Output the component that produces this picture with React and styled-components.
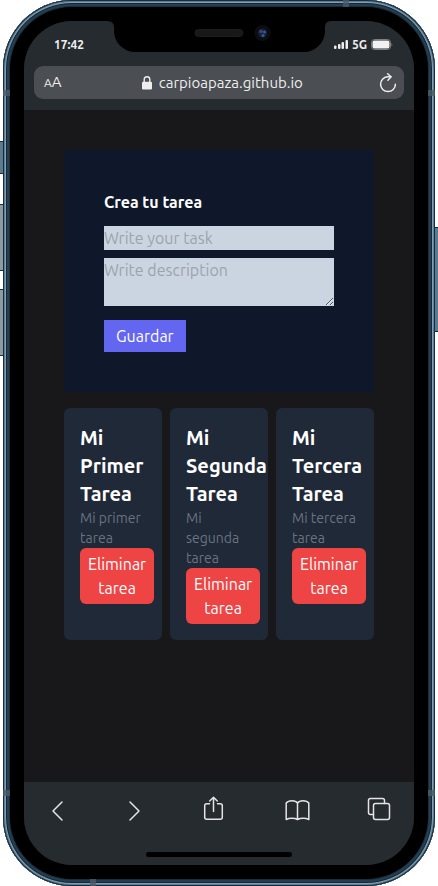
import React, { useState } from "react";
import styled, { createGlobalStyle } from "styled-components";

const GlobalStyle = createGlobalStyle`
  *, *::before, *::after { box-sizing: border-box; }
  body {
    margin: 0;
    background: #ffffff;
    font-family: Ubuntu, "Noto Sans", "Open Sans", sans-serif;
    font-size: 16px;
    line-height: 24px;
  }
  h1, h2, p { margin: 0; }
  button, input, textarea { font: inherit; color: inherit; border: 0; padding: 0; margin: 0; }
  button { background: none; cursor: pointer; }
`;

const Stage = styled.div`
  display: flex;
  min-height: 100vh;
  padding: 0 3px;
`;

const Phone = styled.div`
  position: relative;
  display: flex;
  flex: 1;
  min-width: 0;
  padding: 21px;
  border-radius: 69px;
  background: #000000;
  box-shadow:
    inset 0 0 0 1px #1b2b37,
    inset 0 0 0 2px #5b7d95,
    inset 0 0 0 3px #7d9fb8,
    inset 0 0 0 4px #182833,
    inset 0 0 0 6px #243f50,
    inset 0 0 0 7px #1c2d39;
`;

const SideKey = styled.span`
  position: absolute;
  top: ${(p) => p.$top}px;
  ${(p) => p.$side}: -3px;
  width: 3px;
  height: ${(p) => p.$length}px;
  border-top: 1px solid #1b2b37;
  border-bottom: 1px solid #1b2b37;
  background: ${(p) => p.$color};
`;

const Antenna = styled.span`
  position: absolute;
  width: ${(p) => (p.$flat ? 6 : 7)}px;
  height: ${(p) => (p.$flat ? 7 : 6)}px;
  background: #4b5c66;
  opacity: 0.8;
  ${(p) => p.$edge}: 0;
  ${(p) => p.$from}: ${(p) => p.$offset}px;
`;

const Notch = styled.svg`
  position: absolute;
  top: 20px;
  left: 50%;
  width: 224px;
  height: 32px;
  transform: translateX(-50%);
`;

const Screen = styled.div`
  display: flex;
  flex-direction: column;
  flex: 1;
  min-width: 0;
  overflow: hidden;
  border-radius: 48px;
  background: #18181a;
`;

const BrowserHeader = styled.header`
  padding: 0 10px 11px;
  background: #262b2f;
  color: #eeeeee;
`;

const StatusBar = styled.div`
  display: flex;
  align-items: center;
  justify-content: space-between;
  height: 45px;
  padding: 2px 11px 0 20px;
  font-size: 12px;
  font-weight: 700;
`;

const StatusGroup = styled.div`
  display: flex;
  align-items: center;
  gap: 4px;
`;

const AddressBar = styled.div`
  display: flex;
  align-items: center;
  height: 33px;
  padding: 0 7px 0 10px;
  border-radius: 9px;
  background: #4b4e52;
`;

const TextSizeButton = styled.button`
  display: flex;
  align-items: baseline;
  font-size: 15px;
  line-height: 24px;
`;

const SmallLetter = styled.span`
  font-size: 12px;
`;

const Address = styled.a`
  display: flex;
  flex: 1;
  align-items: center;
  justify-content: center;
  gap: 7px;
  padding-left: 4px;
  color: inherit;
  font-size: 15px;
  line-height: 20px;
  text-decoration: none;
`;

const IconButton = styled.button`
  display: flex;
  align-items: center;
  justify-content: center;
`;

const Icon = styled.svg`
  display: block;
  flex: none;
`;

const Page = styled.main`
  flex: 1;
  padding: 40px;
`;

const TaskForm = styled.form`
  padding: 40px;
  margin-bottom: 16px;
  background: #0f172a;
`;

const FormTitle = styled.h1`
  margin-bottom: 12px;
  color: #ffffff;
  font-size: 16px;
  font-weight: 700;
  line-height: 24px;
`;

const TextField = styled.input`
  display: block;
  width: 100%;
  height: 24px;
  margin-bottom: 8px;
  border-radius: 0;
  background: #cbd5e1;
  color: #111827;
  outline: none;
  &::placeholder { color: #9ca3af; opacity: 1; }
`;

const DescriptionField = styled.textarea`
  display: block;
  width: 100%;
  height: 48px;
  margin-bottom: 14px;
  border-radius: 0;
  background: #cbd5e1;
  color: #111827;
  outline: none;
  resize: both;
  &::placeholder { color: #9ca3af; opacity: 1; }
`;

const SaveButton = styled.button`
  padding: 4px 12px;
  background: #6366f1;
  color: #ffffff;
`;

const TaskGrid = styled.section`
  display: grid;
  grid-template-columns: repeat(3, minmax(0, 1fr));
  gap: 8px;
`;

const TaskCard = styled.article`
  padding: 16px;
  border-radius: 6px;
  background: #1f2937;
`;

const TaskTitle = styled.h2`
  color: #ffffff;
  font-size: 20px;
  font-weight: 700;
  line-height: 28px;
`;

const TaskText = styled.p`
  color: #6b7280;
  font-size: 14px;
  line-height: 20px;
`;

const DeleteButton = styled.button`
  padding: 4px 8px;
  border-radius: 6px;
  background: #ef4444;
  color: #ffffff;
`;

const BrowserFooter = styled.footer`
  padding: 10px 0 8px;
  background: #262b2f;
  color: #e4e4e6;
`;

const Toolbar = styled.nav`
  display: grid;
  grid-template-columns: 66fr 88fr 70fr 98fr 66fr;
  padding-right: 2px;
  margin-bottom: 24px;
`;

const HomeIndicator = styled.div`
  width: 146px;
  height: 5px;
  margin: 0 auto;
  border-radius: 3px;
  background: #000000;
`;

const toolbarIcons = [
  { label: "Atrás", shape: <path d="M19 10 10 19l9 9" /> },
  { label: "Adelante", shape: <path d="m10 10 9 9-9 9" /> },
  {
    label: "Compartir",
    shape: (
      <>
        <path d="M10.5 11.8H7.7Q5.7 11.8 5.7 13.8v11.4q0 2 2 2h13.6q2 0 2-2V13.8q0-2-2-2h-2.8" />
        <path d="M14.5 19.5V5.2M10.7 9l3.8-3.8L18.3 9" />
      </>
    ),
  },
  {
    label: "Marcadores",
    shape: (
      <path d="M14.5 11v16.5M14.5 11C12.5 8 5.5 8 3.2 11v16.5c3-1.8 8.3-1.8 11.3 0 3-1.8 8.3-1.8 11.3 0V11C23.5 8 16.5 8 14.5 11" />
    ),
  },
  {
    label: "Pestañas",
    shape: (
      <>
        <rect x="8.5" y="11.5" width="16" height="16" rx="2" />
        <path d="M8.5 22.5h-3q-2 0-2-2v-12q0-2 2-2h12q2 0 2 2v3" />
      </>
    ),
  },
];

const initialTasks = [
  { id: 1, title: "Mi Primer Tarea", description: "Mi primer tarea" },
  { id: 2, title: "Mi Segunda Tarea", description: "Mi segunda tarea" },
  { id: 3, title: "Mi Tercera Tarea", description: "Mi tercera tarea" },
];

function SignalIcon() {
  return (
    <Icon width="14" height="9" viewBox="0 0 14 9" fill="#eeeeee" aria-hidden="true">
      <rect x="0" y="5.5" width="2.5" height="3.5" rx="1" />
      <rect x="4" y="4" width="2.5" height="5" rx="1" />
      <rect x="7.5" y="2" width="2.5" height="7" rx="1" />
      <rect x="11.5" y="0" width="2.5" height="9" rx="1" />
    </Icon>
  );
}

function BatteryIcon() {
  return (
    <Icon width="22" height="11" viewBox="0 0 22 11" aria-hidden="true">
      <rect x="0.5" y="0.5" width="19" height="10" rx="3" fill="none" stroke="#7b7f82" />
      <rect x="1.5" y="1.5" width="17" height="8" rx="2" fill="#f2f2f2" />
      <path d="M20.5 3.5q1.5 2 0 4z" fill="#7b7f82" />
    </Icon>
  );
}

function LockIcon() {
  return (
    <Icon width="10" height="14" viewBox="0 0 10 14" aria-hidden="true">
      <path d="M2.2 6V3.5a2.8 2.8 0 0 1 5.6 0V6" fill="none" stroke="#eeeeee" strokeWidth="1.4" />
      <rect x="0" y="5.8" width="10" height="7.7" rx="1.2" fill="#eeeeee" />
    </Icon>
  );
}

function ReloadIcon() {
  return (
    <Icon
      width="18"
      height="20"
      viewBox="0 0 18 20"
      fill="none"
      stroke="#eeeeee"
      strokeWidth="1.5"
      strokeLinecap="round"
      strokeLinejoin="round"
      aria-hidden="true"
    >
      <path d="M12 3.8H9A7.4 7.4 0 1 0 16.4 11.2" />
      <path d="M8.6 0.8 12 3.8 9 7.2" />
    </Icon>
  );
}

function PhoneNotch() {
  return (
    <Notch viewBox="0 0 224 32" aria-hidden="true">
      <path
        d="M0 0H224V1Q218 1 218 7V11A21 21 0 0 1 197 32H28A21 21 0 0 1 7 11V7Q7 1 0 1Z"
        fill="#000000"
      />
      <rect x="88" y="9.5" width="48" height="7" rx="3.5" fill="#181818" stroke="#1e1e1e" />
      <circle cx="155.5" cy="13" r="8" fill="#0d0d10" />
      <circle cx="155.5" cy="13" r="4.5" fill="#15203a" />
      <circle cx="154" cy="11.5" r="1.7" fill="#44408a" />
      <circle cx="157.5" cy="12" r="1.5" fill="#2f5f8e" />
      <circle cx="156" cy="15.5" r="1.5" fill="#28628f" />
    </Notch>
  );
}

export default function App() {
  const [tasks, setTasks] = useState(initialTasks);
  const [title, setTitle] = useState("");
  const [description, setDescription] = useState("");

  const addTask = (event) => {
    event.preventDefault();
    if (!title) return;
    setTasks([...tasks, { id: Date.now(), title, description }]);
    setTitle("");
    setDescription("");
  };

  return (
    <>
      <GlobalStyle />
      <Stage>
        <Phone>
          <SideKey $side="left" $top={141} $length={33} $color="#5b7a8e" />
          <SideKey $side="left" $top={204} $length={67} $color="#8b9aa3" />
          <SideKey $side="left" $top={289} $length={67} $color="#8b9aa3" />
          <SideKey $side="right" $top={227} $length={105} $color="#5b7a8e" />
          <Antenna $edge="left" $from="top" $offset={90} />
          <Antenna $edge="right" $from="top" $offset={90} />
          <Antenna $edge="left" $from="bottom" $offset={90} />
          <Antenna $edge="right" $from="bottom" $offset={90} />
          <Antenna $flat $edge="top" $from="right" $offset={86} />
          <Antenna $flat $edge="bottom" $from="left" $offset={87} />

          <Screen>
            <BrowserHeader>
              <StatusBar>
                <time>17:42</time>
                <StatusGroup>
                  <SignalIcon />
                  <span>5G</span>
                  <BatteryIcon />
                </StatusGroup>
              </StatusBar>
              <AddressBar>
                <TextSizeButton type="button">
                  <SmallLetter>A</SmallLetter>
                  <span>A</span>
                </TextSizeButton>
                <Address href="#">
                  <LockIcon />
                  carpioapaza.github.io
                </Address>
                <IconButton type="button" aria-label="Recargar">
                  <ReloadIcon />
                </IconButton>
              </AddressBar>
            </BrowserHeader>

            <Page>
              <TaskForm onSubmit={addTask}>
                <FormTitle>Crea tu tarea</FormTitle>
                <TextField
                  type="text"
                  aria-label="Write your task"
                  placeholder="Write your task"
                  value={title}
                  onChange={(e) => setTitle(e.target.value)}
                />
                <DescriptionField
                  aria-label="Write description"
                  placeholder="Write description"
                  value={description}
                  onChange={(e) => setDescription(e.target.value)}
                />
                <SaveButton type="submit">Guardar</SaveButton>
              </TaskForm>

              <TaskGrid>
                {tasks.map((task) => (
                  <TaskCard key={task.id}>
                    <TaskTitle>{task.title}</TaskTitle>
                    <TaskText>{task.description}</TaskText>
                    <DeleteButton
                      type="button"
                      onClick={() => setTasks(tasks.filter((t) => t.id !== task.id))}
                    >
                      Eliminar tarea
                    </DeleteButton>
                  </TaskCard>
                ))}
              </TaskGrid>
            </Page>

            <BrowserFooter>
              <Toolbar>
                {toolbarIcons.map(({ label, shape }) => (
                  <IconButton key={label} type="button" aria-label={label}>
                    <Icon
                      width="29"
                      height="36"
                      viewBox="0 0 29 36"
                      fill="none"
                      stroke="currentColor"
                      strokeWidth="1.5"
                      strokeLinecap="round"
                      strokeLinejoin="round"
                      aria-hidden="true"
                    >
                      {shape}
                    </Icon>
                  </IconButton>
                ))}
              </Toolbar>
              <HomeIndicator />
            </BrowserFooter>
          </Screen>
          <PhoneNotch />
        </Phone>
      </Stage>
    </>
  );
}
